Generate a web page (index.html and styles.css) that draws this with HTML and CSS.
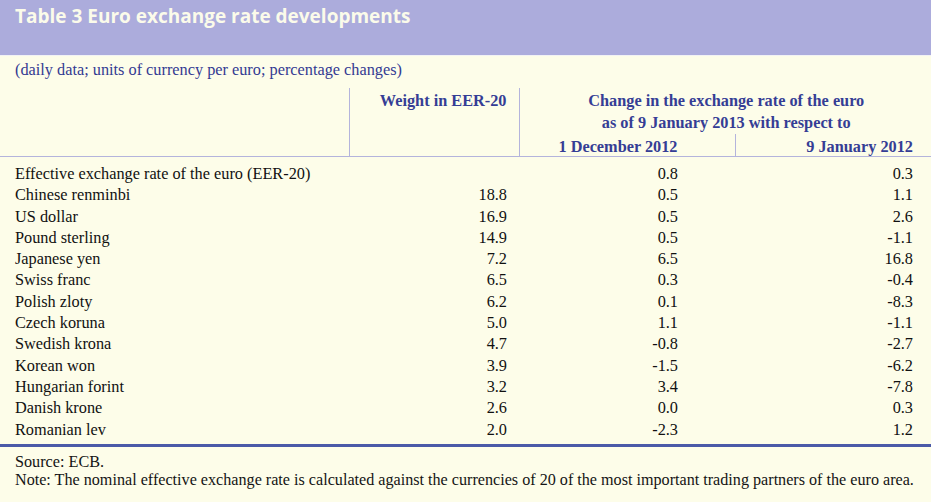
FILE: index.html
```html
<!DOCTYPE html>
<html>
<head>
<meta charset="utf-8">
<link rel="stylesheet" href="styles.css">
</head>
<body>
<div class="page">
  <div class="band"><h1 class="title">Table 3 Euro exchange rate developments</h1></div>
  <p class="subtitle">(daily data; units of currency per euro; percentage changes)</p>
  <table class="rates">
    <colgroup>
      <col class="c1"><col class="c2"><col class="c3"><col class="c4">
    </colgroup>
    <thead>
      <tr>
        <th class="blank" rowspan="3"></th>
        <th class="weight" rowspan="3">Weight in EER-20</th>
        <th class="change" colspan="2">Change in the exchange rate of the euro<br>as of 9 January 2013 with respect to</th>
      </tr>
      <tr class="spacer"></tr>
      <tr>
        <th class="d1">1 December 2012</th>
        <th class="d2">9 January 2012</th>
      </tr>
    </thead>
    <tbody>
      <tr class="first"><td>Effective exchange rate of the euro (EER-20)</td><td></td><td>0.8</td><td>0.3</td></tr>
      <tr><td>Chinese renminbi</td><td>18.8</td><td>0.5</td><td>1.1</td></tr>
      <tr><td>US dollar</td><td>16.9</td><td>0.5</td><td>2.6</td></tr>
      <tr><td>Pound sterling</td><td>14.9</td><td>0.5</td><td>-1.1</td></tr>
      <tr><td>Japanese yen</td><td>7.2</td><td>6.5</td><td>16.8</td></tr>
      <tr><td>Swiss franc</td><td>6.5</td><td>0.3</td><td>-0.4</td></tr>
      <tr><td>Polish zloty</td><td>6.2</td><td>0.1</td><td>-8.3</td></tr>
      <tr><td>Czech koruna</td><td>5.0</td><td>1.1</td><td>-1.1</td></tr>
      <tr><td>Swedish krona</td><td>4.7</td><td>-0.8</td><td>-2.7</td></tr>
      <tr><td>Korean won</td><td>3.9</td><td>-1.5</td><td>-6.2</td></tr>
      <tr><td>Hungarian forint</td><td>3.2</td><td>3.4</td><td>-7.8</td></tr>
      <tr><td>Danish krone</td><td>2.6</td><td>0.0</td><td>0.3</td></tr>
      <tr class="last"><td>Romanian lev</td><td>2.0</td><td>-2.3</td><td>1.2</td></tr>
    </tbody>
  </table>
  <div class="notes">
    <p>Source: ECB.</p>
    <p class="note">Note: The nominal effective exchange rate is calculated against the currencies of 20 of the most important trading partners of the euro area.</p>
  </div>
</div>
</body>
</html>
```
FILE: styles.css
```css
html, body {
  margin: 0;
  padding: 0;
  background: #fdfde9;
}
.page {
  width: 931px;
  height: 502px;
  background: #fdfde9;
  font-family: "Liberation Serif", "Times New Roman", serif;
  overflow: hidden;
}
.band {
  background: #acacdc;
  border-bottom: 1px solid #f2f2f4;
  box-sizing: border-box;
  height: 56px;
}
.title {
  margin: 0;
  padding: 3px 0 0 15px;
  font-family: "Open Sans", "DejaVu Sans", sans-serif;
  font-weight: 700;
  font-size: 19px;
  letter-spacing: 0;
  line-height: 26px;
  color: #fbfbea;
}
.subtitle {
  margin: 4px 0 0 0;
  padding-left: 15px;
  font-size: 16.3px;
  line-height: 20px;
  color: #333a92;
  height: 28px;
}
.rates {
  width: 931px;
  border-collapse: collapse;
  table-layout: fixed;
  font-size: 16.3px;
}
.c1 { width: 349px; }
.c2 { width: 170px; }
.c3 { width: 216px; }
.c4 { width: 196px; }
.rates th {
  font-weight: 700;
  color: #353d95;
  text-align: right;
  vertical-align: top;
  padding: 0;
  line-height: 22px;
}
.rates thead tr:first-child th { padding-top: 2px; }
.rates th.blank {
  border-right: 1px solid #b4b4dc;
}
.rates th.weight {
  border-right: 1px solid #b4b4dc;
  padding-right: 12px;
}
.rates th.change {
  text-align: center;
  padding-left: 2px;
  height: 44px;
}
.rates tr.spacer { height: 0; }
.rates th.d1,
.rates th.d2 {
  padding-top: 3px;
  line-height: 19px;
}
.rates th.d1 {
  padding-right: 57px;
  border-right: 1px solid #b4b4dc;
}
.rates th.d2 {
  padding-right: 18px;
}
.rates thead {
  border-bottom: 1px solid #b4b4dc;
}
.rates td {
  padding: 0;
  line-height: 21.3px;
  color: #111;
  text-align: right;
  white-space: nowrap;
}
.rates td:first-child {
  text-align: left;
  padding-left: 15px;
}
.rates td:nth-child(2) { padding-right: 12px; }
.rates td:nth-child(3) { padding-right: 57px; }
.rates td:nth-child(4) { padding-right: 18px; }
.rates tr.first td { padding-top: 6px; }
.rates tr.last td { padding-bottom: 4px; }
.rates tbody { border-bottom: 3px solid #4b5aa8; }
.notes {
  padding: 7px 0 0 15px;
  font-size: 16.2px;
  line-height: 17px;
  color: #141414;
}
.notes p { margin: 0; }
.note {
  white-space: nowrap;
  font-size: 16.15px;
}
```
